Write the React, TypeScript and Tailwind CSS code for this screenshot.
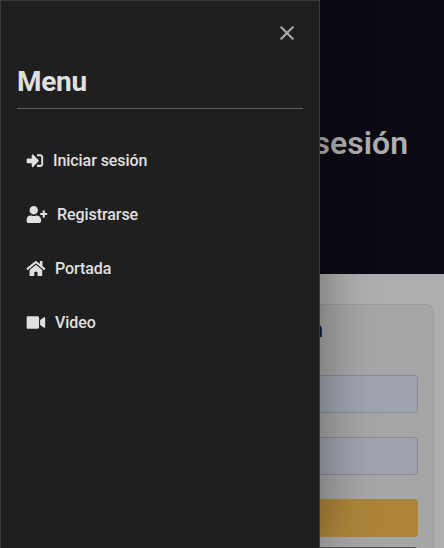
import { FaHome, FaSignInAlt, FaUserPlus, FaVideo } from "react-icons/fa";

const items = [
  { label: "Iniciar sesión", Icon: FaSignInAlt, size: "h-[17px] w-[17px]" },
  { label: "Registrarse", Icon: FaUserPlus, size: "h-[17px] w-[21px]" },
  { label: "Portada", Icon: FaHome, size: "h-[17px] w-[19px]" },
  { label: "Video", Icon: FaVideo, size: "h-[17px] w-[19px]" },
];

function Page() {
  return (
    <div className="flex h-full flex-col bg-[#aeaeae]">
      <header className="flex h-[274px] shrink-0 items-center justify-end bg-[#0b0913] pr-[36px] pt-[11px]">
        <h1 className="whitespace-nowrap text-[32px] font-semibold leading-10 text-[#aeaeae]">sesión</h1>
      </header>
      <main className="mx-[10px] mt-[30px] h-[300px] shrink-0 rounded-lg border border-[#9b9b9b] bg-[#a6a6a6] px-[15px] pt-[9px]">
        <h2 className="mb-[29px] mr-[95px] text-right text-[22px] font-medium leading-8 text-[#16191c]">n</h2>
        <div className="h-[38px] rounded border border-[#898c95] bg-[#9ea3ae]" />
        <div className="mt-6 h-[38px] rounded border border-[#898c95] bg-[#9ea3ae]" />
        <div className="mt-6 h-[38px] rounded bg-[#ac853a]" />
        <div className="mt-[10px] h-[38px] rounded bg-[#49494b]" />
      </main>
    </div>
  );
}

export default function App() {
  return (
    <div className="relative h-[548px] w-[444px] overflow-hidden font-[Roboto,sans-serif]">
      <Page />
      <aside className="absolute inset-y-0 left-0 flex w-[320px] flex-col border border-b-0 border-[#3a3a3a] bg-[#1f1f1f] px-4 text-[#e0e0e0] shadow-[0_0_50px_rgba(0,0,0,0.4)]">
        <button aria-label="Cerrar" className="mr-[9px] mt-[25px] self-end text-[#a8a8a8]">
          <svg className="block h-[14px] w-[14px]" viewBox="0 0 14 14" fill="none" stroke="currentColor" strokeWidth="2.2" strokeLinecap="round">
            <path d="M1.3 1.3 12.7 12.7M12.7 1.3 1.3 12.7" />
          </svg>
        </button>
        <h2 className="mt-[22px] border-b border-[#606060] pb-[6px] text-[28px] font-bold leading-10 tracking-[-0.3px]">Menu</h2>
        <nav className="mt-[30px] flex flex-col">
          {items.map(({ label, Icon, size }) => (
            <a key={label} className="flex h-[54px] items-center gap-[10px] px-[9px] pb-[10px] text-base font-medium leading-6 tracking-[-0.07px]" href="#">
              <Icon className={`${size} translate-x-[0.4px] -translate-y-px`} />
              {label}
            </a>
          ))}
        </nav>
      </aside>
    </div>
  );
}
